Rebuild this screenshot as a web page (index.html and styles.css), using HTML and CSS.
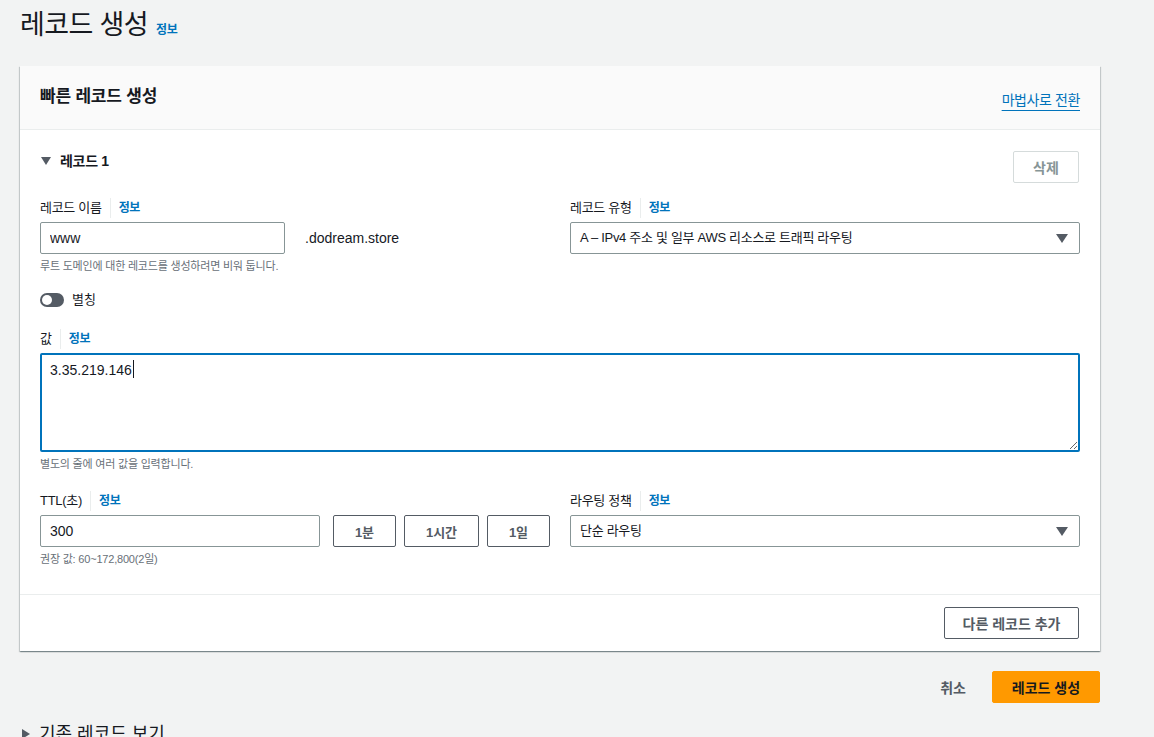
FILE: index.html
```html
<!DOCTYPE html>
<html lang="ko">
<head>
<meta charset="utf-8">
<title>레코드 생성</title>
<link rel="stylesheet" href="styles.css">
</head>
<body>
<div class="page">
  <div class="page-title">
    <h1>레코드 생성</h1>
    <a class="info info-title" href="#">정보</a>
  </div>

  <section class="card">
    <header class="card-header">
      <h2>빠른 레코드 생성</h2>
      <a class="link" href="#">마법사로 전환</a>
    </header>

    <div class="card-body">
      <div class="record-head">
        <div class="record-title">
          <svg class="tri" width="10" height="8" viewBox="0 0 10 8"><path d="M0 0h10L5 8z" fill="#545b64"/></svg>
          <span>레코드 1</span>
        </div>
        <button class="btn btn-disabled" type="button">삭제</button>
      </div>

      <div class="grid2 row-name">
        <div class="field">
          <div class="label"><span>레코드 이름</span><a class="info" href="#">정보</a></div>
          <div class="name-row">
            <input class="input name-input" type="text" value="www">
            <span class="suffix">.dodream.store</span>
          </div>
          <div class="hint">루트 도메인에 대한 레코드를 생성하려면 비워 둡니다.</div>
        </div>
        <div class="field">
          <div class="label"><span>레코드 유형</span><a class="info" href="#">정보</a></div>
          <div class="select">
            <span>A – IPv4 주소 및 일부 AWS 리소스로 트래픽 라우팅</span>
            <svg width="12" height="9" viewBox="0 0 12 9"><path d="M0 0h12L6 9z" fill="#545b64"/></svg>
          </div>
        </div>
      </div>

      <div class="toggle-row">
        <span class="toggle"><span class="knob"></span></span>
        <span>별칭</span>
      </div>

      <div class="field field-value">
        <div class="label"><span>값</span><a class="info" href="#">정보</a></div>
        <div class="textarea-wrap">
          <textarea class="textarea">3.35.219.146</textarea>
          <span class="caret"></span>
        </div>
        <div class="hint">별도의 줄에 여러 값을 입력합니다.</div>
      </div>

      <div class="grid2 row-ttl">
        <div class="field">
          <div class="label"><span>TTL(초)</span><a class="info" href="#">정보</a></div>
          <div class="ttl-row">
            <input class="input ttl-input" type="text" value="300">
            <button class="btn btn-ttl btn-narrow" type="button">1분</button>
            <button class="btn btn-ttl btn-wide" type="button">1시간</button>
            <button class="btn btn-ttl btn-narrow" type="button">1일</button>
          </div>
          <div class="hint">권장 값: 60~172,800(2일)</div>
        </div>
        <div class="field">
          <div class="label"><span>라우팅 정책</span><a class="info" href="#">정보</a></div>
          <div class="select">
            <span>단순 라우팅</span>
            <svg width="12" height="9" viewBox="0 0 12 9"><path d="M0 0h12L6 9z" fill="#545b64"/></svg>
          </div>
        </div>
      </div>
    </div>

    <footer class="card-footer">
      <button class="btn btn-normal" type="button">다른 레코드 추가</button>
    </footer>
  </section>

  <div class="actions">
    <button class="btn-link" type="button">취소</button>
    <button class="btn-primary" type="button">레코드 생성</button>
  </div>

  <div class="existing">
    <svg width="8" height="10" viewBox="0 0 8 10"><path d="M0 0v10l8-5z" fill="#545b64"/></svg>
    <span>기존 레코드 보기</span>
  </div>
</div>
</body>
</html>
```

FILE: styles.css
```css
* { box-sizing: border-box; }

html, body {
  margin: 0;
  padding: 0;
  background: #f2f3f3;
}

body {
  font-family: "Liberation Sans", "Noto Sans CJK KR", sans-serif;
  font-size: 14px;
  color: #16191f;
  line-height: 20px;
}

.page {
  padding: 0 54px 0 20px;
}

.page-title {
  display: flex;
  align-items: baseline;
  gap: 8px;
  padding-top: 6px;
  height: 66px;
}

.page-title h1 {
  margin: 0;
  font-size: 27px;
  line-height: 38px;
  font-weight: 400;
  letter-spacing: -0.6px;
}

.info {
  color: #0073bb;
  font-size: 12px;
  font-weight: 700;
  text-decoration: none;
  letter-spacing: -0.3px;
}

.card {
  background: #fff;
  box-shadow: 0 1px 1px 0 rgba(0, 28, 36, 0.3), 1px 1px 1px 0 rgba(0, 28, 36, 0.15), -1px 1px 1px 0 rgba(0, 28, 36, 0.15);
}

.card-header {
  display: flex;
  justify-content: space-between;
  align-items: center;
  background: #fafafa;
  border-bottom: 1px solid #eaeded;
  height: 64px;
  padding: 0 20px;
}

.card-header h2 {
  margin: 0;
  font-size: 17px;
  font-weight: 700;
  letter-spacing: -0.2px;
  margin-top: -2px;
}

.link {
  color: #0073bb;
  font-size: 14px;
  letter-spacing: -0.4px;
  text-decoration: underline;
  text-underline-offset: 5px;
  margin-top: 4px;
}

.card-body {
  padding: 21px 20px 27px;
  border-bottom: 1px solid #eaeded;
}

.record-head {
  display: flex;
  justify-content: space-between;
  align-items: flex-start;
}

.record-title {
  display: flex;
  align-items: center;
  gap: 9px;
  font-weight: 700;
  font-size: 14px;
  line-height: 20px;
  padding-left: 1px;
  letter-spacing: -0.3px;
}

.btn {
  font-family: inherit;
  height: 32px;
  font-size: 14px;
  border-radius: 2px;
  background: #fff;
  cursor: pointer;
  padding: 0;
  white-space: nowrap;
}

.btn-disabled {
  border: 1px solid #d5dbdb;
  color: #879596;
  font-weight: 700;
  width: 66px;
  margin-right: 1px;
}

.grid2 {
  display: grid;
  grid-template-columns: 1fr 1fr;
  column-gap: 20px;
}

.row-name { margin-top: 15px; }

.field { display: flex; flex-direction: column; }

.label {
  display: flex;
  align-items: center;
  height: 20px;
  margin-bottom: 4px;
  font-size: 13px;
  letter-spacing: -0.3px;
}

.label .info {
  border-left: 1px solid #eaeded;
  margin-left: 8px;
  padding-left: 8px;
  line-height: 20px;
}

.input {
  font-family: inherit;
  font-size: 14px;
  color: #16191f;
  height: 32px;
  border: 1px solid #879596;
  border-radius: 2px;
  padding: 0 9px;
  background: #fff;
  outline: none;
}

.name-row {
  display: flex;
  align-items: center;
  gap: 20px;
}

.name-input { width: 245px; }

.suffix { font-size: 14px; }

.hint {
  margin-top: 4px;
  font-size: 11px;
  line-height: 16px;
  color: #687078;
  letter-spacing: -0.2px;
}

.select {
  display: flex;
  justify-content: space-between;
  align-items: center;
  height: 32px;
  border: 1px solid #879596;
  border-radius: 2px;
  padding: 0 11px 0 9px;
  background: #fff;
  font-size: 13px;
  letter-spacing: -0.3px;
}

.toggle-row {
  display: flex;
  align-items: center;
  gap: 8px;
  margin-top: 16px;
  font-size: 13px;
}

.toggle {
  display: inline-flex;
  align-items: center;
  width: 24px;
  height: 14px;
  border-radius: 7px;
  background: #545b64;
  padding: 0 2px;
}

.knob {
  width: 10px;
  height: 10px;
  border-radius: 50%;
  background: #fff;
}

.field-value { margin-top: 19px; }

.textarea-wrap {
  position: relative;
  display: flex;
}

.textarea {
  flex: 1;
  font-family: inherit;
  font-size: 14px;
  color: #16191f;
  height: 99px;
  border: 2px solid #0073bb;
  border-radius: 2px;
  padding: 4px 8px;
  line-height: 22px;
  outline: none;
  resize: vertical;
}

.caret {
  position: absolute;
  left: 93px;
  top: 7px;
  width: 1px;
  height: 18px;
  background: #16191f;
}

.row-ttl { margin-top: 19px; }

.ttl-row {
  display: flex;
  align-items: center;
}

.ttl-input { flex: 1; min-width: 0; margin-right: 13px; }

.btn-ttl {
  border: 1px solid #545b64;
  color: #545b64;
  font-weight: 700;
  font-size: 13px;
}

.btn-narrow { width: 63px; }
.btn-wide { width: 75px; margin: 0 8px; }

.card-footer {
  display: flex;
  justify-content: flex-end;
  padding: 12px 21px 12px 20px;
}

.btn-normal {
  border: 1px solid #545b64;
  color: #545b64;
  font-weight: 700;
  width: 135px;
}

.actions {
  display: flex;
  justify-content: flex-end;
  align-items: center;
  gap: 14px;
  margin-top: 20px;
}

.btn-link {
  font-family: inherit;
  background: none;
  border: none;
  font-size: 14px;
  font-weight: 700;
  color: #545b64;
  padding: 0 12px;
  height: 32px;
}

.btn-primary {
  font-family: inherit;
  background: #ff9900;
  border: 1px solid #ff9900;
  border-radius: 2px;
  font-size: 14px;
  font-weight: 700;
  color: #16191f;
  width: 108px;
  height: 32px;
}

.existing {
  display: flex;
  align-items: center;
  gap: 9px;
  margin-top: 19px;
  padding-left: 2px;
  font-size: 18px;
  line-height: 24px;
}
```
